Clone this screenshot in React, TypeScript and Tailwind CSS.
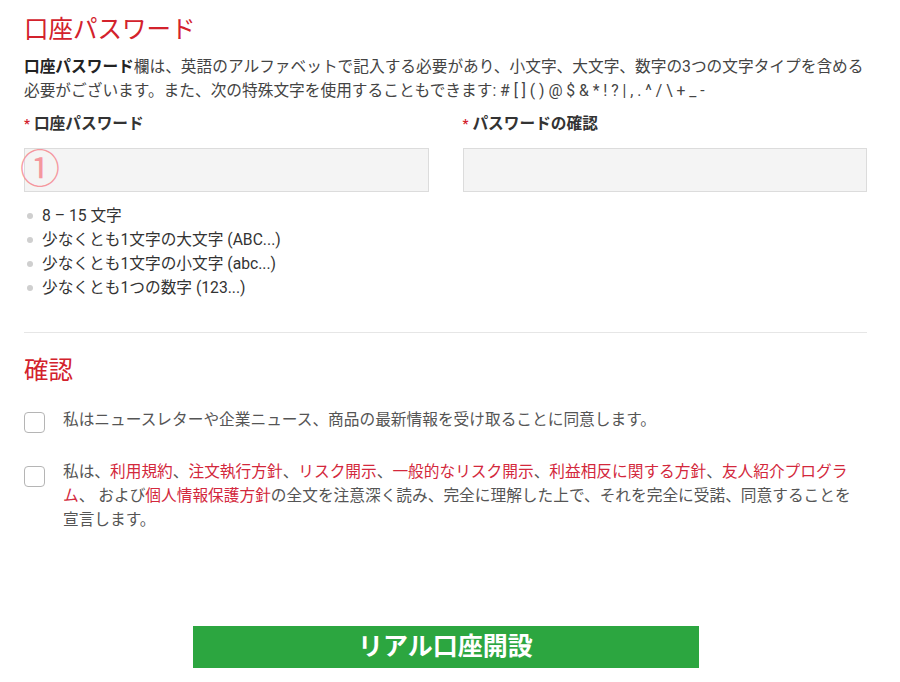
import React from "react";

const font = { fontFamily: "Roboto, 'Noto Sans CJK JP', sans-serif" };

function Bullet({ children }: { children: React.ReactNode }) {
  return (
    <li className="flex items-center h-[24px] leading-[24px]">
      <span className="w-[6px] h-[6px] rounded-full bg-[#cfcfcf] ml-[3px] mr-[9px]" />
      <span className="text-[#333]">{children}</span>
    </li>
  );
}

function Red({ children }: { children: React.ReactNode }) {
  return <span className="text-[#d3283c]">{children}</span>;
}

export default function App() {
  return (
    <div className="w-[900px] min-h-[682px] bg-white pl-[24px] pr-[33px] text-[15.7px]" style={font}>
      <h1 className="pt-[14px] h-[46px] leading-[32px] text-[24.5px] text-[#d3222c] font-normal">口座パスワード</h1>
      <div className="mt-[9px] leading-[24px] text-[#444]">
        <div className="whitespace-nowrap">
          <b className="font-bold text-[#222]">口座パスワード</b>欄は、英語のアルファベットで記入する必要があり、小文字、大文字、数字の3つの文字タイプを含める
        </div>
        <div className="whitespace-nowrap">
          必要がございます。また、次の特殊文字を使用することもできます: # [ ] ( ) @ $ &amp; * ! ? | , . ^ / \ + _ -
        </div>
      </div>

      <div className="grid grid-cols-2 gap-x-[34px] mt-[9px]">
        <div>
          <div className="h-[24px] leading-[24px] font-bold text-[#333]">
            <span className="text-[#d3222c] text-[13px] mr-[4px] align-top">*</span>口座パスワード
          </div>
          <div className="relative mt-[12px] h-[44px] bg-[#f4f4f4] border border-[#dcdcdc]">
            <span className="absolute left-[-5px] top-[-1px] text-[40px] leading-[44px] text-[#f4979e]">①</span>
          </div>
        </div>
        <div>
          <div className="h-[24px] leading-[24px] font-bold text-[#333]">
            <span className="text-[#d3222c] text-[13px] mr-[4px] align-top">*</span>パスワードの確認
          </div>
          <div className="mt-[12px] h-[44px] bg-[#f4f4f4] border border-[#dcdcdc]" />
        </div>
      </div>

      <ul className="mt-[12px]">
        <Bullet>8 – 15 文字</Bullet>
        <Bullet>少なくとも1文字の大文字 (ABC...)</Bullet>
        <Bullet>少なくとも1文字の小文字 (abc...)</Bullet>
        <Bullet>少なくとも1つの数字 (123...)</Bullet>
      </ul>

      <div className="mt-[32px] border-t border-[#e6e6e6]" />

      <h2 className="mt-[22px] h-[32px] leading-[32px] text-[24.5px] text-[#d3222c] font-normal">確認</h2>

      <div className="mt-[21px] flex items-start">
        <div className="mt-[4px] w-[21px] h-[21px] shrink-0 rounded-[4px] border border-[#b5b5b5] bg-white" />
        <div className="ml-[18px] leading-[24px] text-[#555] whitespace-nowrap">
          私はニュースレターや企業ニュース、商品の最新情報を受け取ることに同意します。
        </div>
      </div>

      <div className="mt-[27px] flex items-start">
        <div className="mt-[6px] w-[21px] h-[21px] shrink-0 rounded-[4px] border border-[#b5b5b5] bg-white" />
        <div className="ml-[18px] leading-[24px] text-[#555]">
          <div className="whitespace-nowrap">
            私は、<Red>利用規約</Red>、<Red>注文執行方針</Red>、<Red>リスク開示</Red>、<Red>一般的なリスク開示</Red>、<Red>利益相反に関する方針</Red>、<Red>友人紹介プログラ</Red>
          </div>
          <div className="whitespace-nowrap">
            <Red>ム</Red>、 および<Red>個人情報保護方針</Red>の全文を注意深く読み、完全に理解した上で、それを完全に受諾、同意することを
          </div>
          <div className="whitespace-nowrap">宣言します。</div>
        </div>
      </div>

      <div className="mt-[94px] flex justify-center">
        <button className="w-[506px] h-[42px] bg-[#2ca640] text-white font-bold text-[25px] leading-[42px]">
          リアル口座開設
        </button>
      </div>
    </div>
  );
}
